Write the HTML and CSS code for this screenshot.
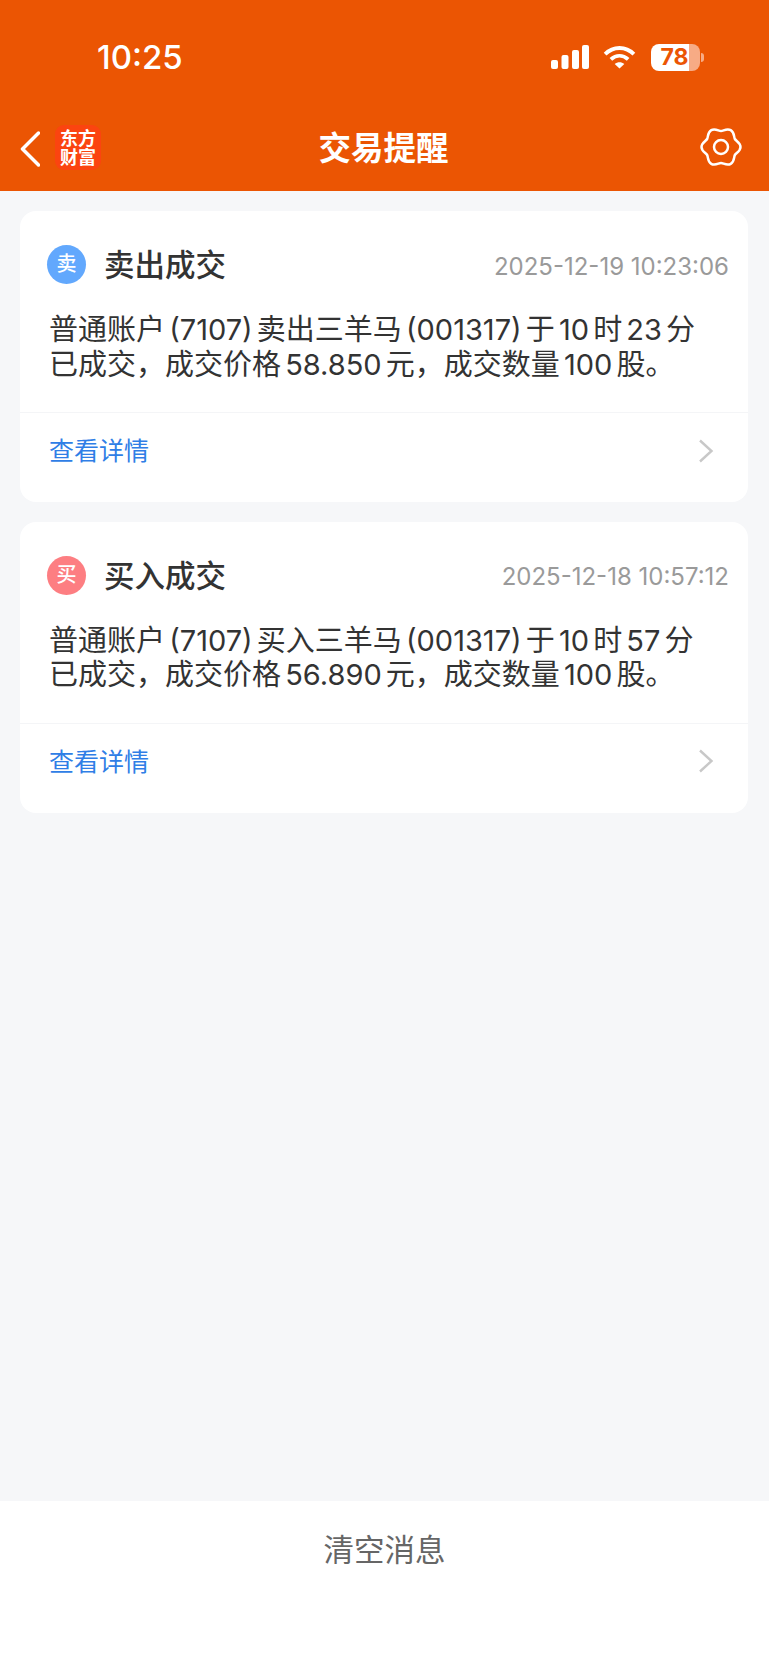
FILE: index.html
```html
<!DOCTYPE html>
<html lang="zh-CN">
<head>
    <meta charset="UTF-8">
    <meta name="viewport" content="width=device-width, initial-scale=1.0">
    <title>交易提醒</title>
    <link rel="stylesheet" href="styles.css">
</head>
<body>
    <div class="page">
        <header class="top">
            <div class="status">
                <span class="clock">10:25</span>
                <div class="status-icons">
                    <svg class="signal" width="38" height="24" viewBox="0 0 38 24" fill="#fff">
                        <rect x="0" y="15" width="7" height="9" rx="2"/>
                        <rect x="10.500" y="10" width="7" height="14" rx="2"/>
                        <rect x="21" y="5" width="7" height="19" rx="2"/>
                        <rect x="31" y="0" width="7" height="24" rx="2"/>
                    </svg>
                    <svg class="wifi" width="33" height="24" viewBox="0 0 33 25" fill="none" stroke="#fff" stroke-width="4">
                        <path d="M1.500 9.500C10 1 23 1 31.500 9.500"/>
                        <path d="M7.500 15C13 10 20 10 25.500 15"/>
                        <path d="M16.500 24.500L11.500 19.800C14.500 17.500 18.500 17.500 21.500 19.800Z" fill="#fff" stroke="none"/>
                    </svg>
                    <div class="battery">
                        <div class="battery-body"><span>78</span></div>
                        <div class="battery-tip"></div>
                    </div>
                </div>
            </div>
            <nav class="nav">
                <div class="nav-left">
                    <svg class="back" width="20" height="36" viewBox="0 0 20 36" fill="none" stroke="#fff" stroke-width="3.500" stroke-linecap="round" stroke-linejoin="round">
                        <path d="M18.500 2L2.500 18L18.500 34"/>
                    </svg>
                    <div class="logo">东方<br>财富</div>
                </div>
                <h1>交易提醒</h1>
                <svg class="gear" width="42" height="42" viewBox="0 0 42 42" fill="none" stroke="#fff" stroke-width="2.500" stroke-linejoin="round">
                    <path d="M40.500 21C40.500 16.500 36.010 14.990 34.860 13C33.710 11.010 34.650 6.360 30.750 4.110C26.850 1.860 23.300 5 21 5C18.700 5 15.150 1.860 11.250 4.110C7.350 6.360 8.290 11.010 7.140 13C5.990 14.990 1.500 16.500 1.500 21C1.500 25.500 5.990 27.010 7.140 29C8.290 30.990 7.350 35.640 11.250 37.890C15.150 40.140 18.700 37 21 37C23.300 37 26.850 40.140 30.750 37.890C34.650 35.640 33.710 30.990 34.860 29C36.010 27.010 40.500 25.500 40.500 21Z"/>
                    <circle cx="21" cy="21" r="7"/>
                </svg>
            </nav>
        </header>

        <main class="list">
            <section class="card">
                <div class="card-head">
                    <span class="badge badge-sell">卖</span>
                    <h2>卖出成交</h2>
                    <span class="time">2025-12-19 10:23:06</span>
                </div>
                <p class="msg">普通账户 (7107) 卖出三羊马 (001317) 于 10 时 23 分<br>已成交，成交价格 58.850 元，成交数量 100 股。</p>
                <div class="card-foot">
                    <a class="detail">查看详情</a>
                    <svg class="arrow" width="16" height="24" viewBox="0 0 16 24" fill="none" stroke="#c8c8c8" stroke-width="2.400">
                        <path d="M2 1.500L13.500 12L2 22.500"/>
                    </svg>
                </div>
            </section>

            <section class="card">
                <div class="card-head">
                    <span class="badge badge-buy">买</span>
                    <h2>买入成交</h2>
                    <span class="time">2025-12-18 10:57:12</span>
                </div>
                <p class="msg">普通账户 (7107) 买入三羊马 (001317) 于 10 时 57 分<br>已成交，成交价格 56.890 元，成交数量 100 股。</p>
                <div class="card-foot">
                    <a class="detail">查看详情</a>
                    <svg class="arrow" width="16" height="24" viewBox="0 0 16 24" fill="none" stroke="#c8c8c8" stroke-width="2.400">
                        <path d="M2 1.500L13.500 12L2 22.500"/>
                    </svg>
                </div>
            </section>
        </main>

        <footer class="bottom">清空消息</footer>
    </div>
</body>
</html>
```

FILE: styles.css
```css
* {
    box-sizing: border-box;
}
html, body {
    margin: 0;
    padding: 0;
}
body {
    font-family: Inter, "Noto Sans CJK SC", sans-serif;
    background: #f6f7f9;
    color: #333;
}
.page {
    width: 769px;
    height: 1665px;
    display: flex;
    flex-direction: column;
}
.top {
    height: 191px;
    background: #eb5503;
    color: white;
}
.status {
    height: 106px;
    padding: 38px 65px 0 97px;
    display: flex;
    justify-content: space-between;
    align-items: flex-start;
}
.clock {
    font-size: 33px;
    line-height: 38px;
    font-weight: 500;
}
.status-icons {
    display: flex;
    align-items: center;
    gap: 14px;
    height: 38px;
}
.battery {
    display: flex;
    align-items: center;
    gap: 1px;
    margin-left: 1px;
}
.battery-body {
    width: 49px;
    height: 27px;
    padding-right: 2px;
    border-radius: 8px;
    background: linear-gradient(to right, #fff 78%, #f7ab85 78%);
    color: #eb5503;
    font-size: 23px;
    font-weight: 700;
    line-height: 27px;
    text-align: center;
}
.battery-tip {
    width: 3px;
    height: 9px;
    background: #f7ab85;
    border-radius: 0 3px 3px 0;
}
.nav {
    height: 85px;
    padding: 0 27px 0 20px;
    display: flex;
    align-items: center;
    justify-content: space-between;
    position: relative;
}
.nav-left {
    display: flex;
    align-items: center;
    gap: 15px;
}
.logo {
    width: 46px;
    height: 45px;
    margin-top: -2px;
    background: #fb4410;
    border-radius: 9px;
    font-size: 18px;
    font-weight: 700;
    line-height: 19px;
    text-align: center;
    padding-top: 4px;
}
.nav h1 {
    position: absolute;
    left: 0;
    right: 0;
    margin: 0;
    padding-right: 2px;
    font-size: 32.500px;
    font-weight: 700;
    text-align: center;
    line-height: 40px;
}
.gear {
    margin-top: -4px;
}
.list {
    flex: 1;
    padding: 20px 21px 0 20px;
}
.card {
    height: 291px;
    margin-bottom: 19.500px;
    padding-top: 34px;
    background: white;
    border-radius: 16px;
}
.card-head {
    display: flex;
    align-items: center;
    height: 39px;
    padding: 0 19px 0 27px;
}
.badge {
    width: 39px;
    height: 39px;
    border-radius: 50%;
    color: white;
    font-size: 20px;
    font-weight: 500;
    line-height: 39px;
    text-align: center;
    flex-shrink: 0;
}
.badge-sell {
    background: #62a8fd;
}
.badge-buy {
    background: #fd7e82;
}
.card-head h2 {
    margin: 0 0 3px 18px;
    font-size: 30.500px;
    font-weight: 500;
    flex: 1;
}
.time {
    margin-top: 3px;
    font-size: 24px;
    color: #9a9a9a;
}
.msg {
    margin: 29px 0 30px;
    padding: 0 20px 0 29px;
    font-size: 29px;
    line-height: 34.500px;
    word-spacing: -4px;
    white-space: nowrap;
}
.card-foot {
    height: 90px;
    padding: 0 34px 14px 29px;
    border-top: 1px solid #f4f5f7;
    display: flex;
    align-items: center;
    justify-content: space-between;
}
.detail {
    margin-bottom: 3px;
    font-size: 25px;
    color: #2f7ee6;
}
.bottom {
    height: 164px;
    background: white;
    color: #666;
    font-size: 30.500px;
    text-align: center;
    padding-top: 27px;
    line-height: 44px;
}
```
